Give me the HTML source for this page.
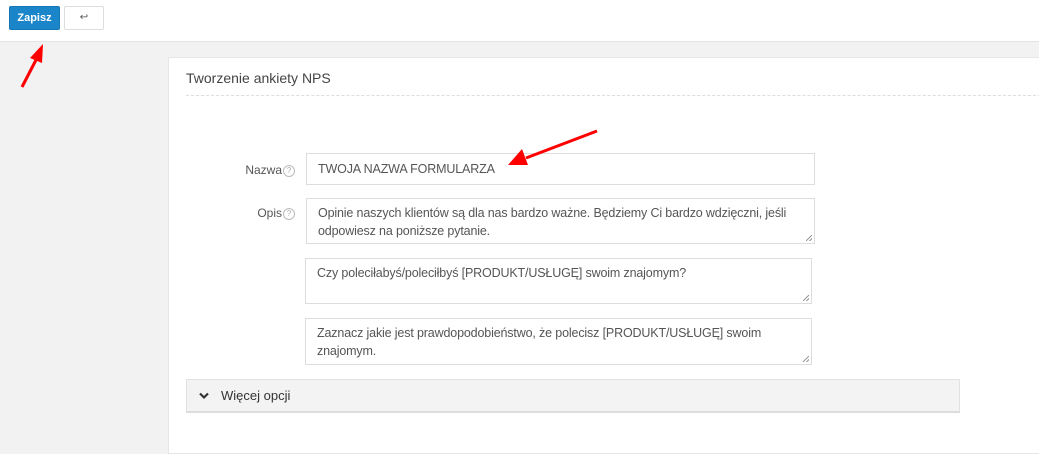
<!DOCTYPE html>
<html><head><style>
body{margin:0;width:1039px;height:448px;background:#f2f2f2;font-family:"Liberation Sans",sans-serif;position:relative;overflow:hidden;color:#555}
.top{position:absolute;left:0;top:0;width:1039px;height:41px;background:#fff;border-bottom:1px solid #e4e4e4}
.btn{position:absolute;top:6px;height:24px;border-radius:2px;font-size:11px;box-sizing:border-box}
.panel{position:absolute;left:168px;top:57px;width:880px;height:395px;background:#fff;border:1px solid #e6e6e6}
.f{position:absolute;border:1px solid #ddd;box-sizing:border-box;font-size:12.5px;letter-spacing:-0.15px;color:#555;padding:8px 11px;line-height:18px;background:#fff}
.lbl{position:absolute;font-size:12px;color:#555;text-align:right}
.q{display:inline-block;width:10px;height:10px;border:1px solid #bbb;border-radius:50%;font-size:8px;line-height:10px;text-align:center;color:#aaa;vertical-align:1px;margin-left:1px}
.rz{position:absolute;right:2px;bottom:2px;width:6px;height:6px;background:linear-gradient(135deg,transparent 45%,#999 45%,#999 55%,transparent 55%,transparent 75%,#999 75%,#999 85%,transparent 85%)}
</style></head><body>
<div class="top">
<div class="btn" style="left:9px;width:51px;background:#1a85c8;color:#fff;font-weight:bold;text-align:center;line-height:22px;border:1px solid #1577b5">Zapisz</div>
<div class="btn" style="left:64px;width:40px;border:1px solid #ddd;text-align:center;line-height:22px;color:#555;font-size:10px">↩</div>
</div>
<div class="panel"></div>
<div style="position:absolute;left:186px;top:70px;font-size:14px;color:#444">Tworzenie ankiety NPS</div>
<div style="position:absolute;left:186px;top:95px;width:860px;border-top:1px dashed #ddd"></div>
<div class="lbl" style="left:230px;top:163px;width:65px">Nazwa<span class="q">?</span></div>
<div class="f" style="left:306px;top:153px;width:509px;height:32px;padding-top:6px">TWOJA NAZWA FORMULARZA</div>
<div class="lbl" style="left:230px;top:206px;width:65px">Opis<span class="q">?</span></div>
<div class="f" style="left:306px;top:198px;width:509px;height:46px;padding-top:5px">Opinie naszych klientów są dla nas bardzo ważne. Będziemy Ci bardzo wdzięczni, jeśli odpowiesz na poniższe pytanie.<div class="rz"></div></div>
<div class="f" style="left:305px;top:258px;width:507px;height:46px;padding-top:5px">Czy poleciłabyś/poleciłbyś [PRODUKT/USŁUGĘ] swoim znajomym?<div class="rz"></div></div>
<div class="f" style="left:305px;top:318px;width:507px;height:47px;padding-top:5px">Zaznacz jakie jest prawdopodobieństwo, że polecisz [PRODUKT/USŁUGĘ] swoim znajomym.<div class="rz"></div></div>
<div style="position:absolute;left:186px;top:379px;width:774px;height:34px;background:#f3f3f3;border:1px solid #e2e2e2;border-bottom:2px solid #ddd;box-sizing:border-box;font-size:13px;color:#333;line-height:31px;padding-left:34px">Więcej opcji
<svg style="position:absolute;left:12px;top:12px" width="10" height="8"><path d="M1 1.5 L5 5.5 L9 1.5" stroke="#333" stroke-width="2.2" fill="none"/></svg></div>
<svg style="position:absolute;left:0;top:0" width="1039" height="448">
<line x1="22" y1="87" x2="37" y2="58" stroke="#f00" stroke-width="3"/>
<polygon points="43,44 30,58 42,63" fill="#f00"/>
<line x1="597" y1="131" x2="526" y2="158" stroke="#f00" stroke-width="3"/>
<polygon points="508,165 522,149 528,165" fill="#f00"/>
</svg>
</body></html>
